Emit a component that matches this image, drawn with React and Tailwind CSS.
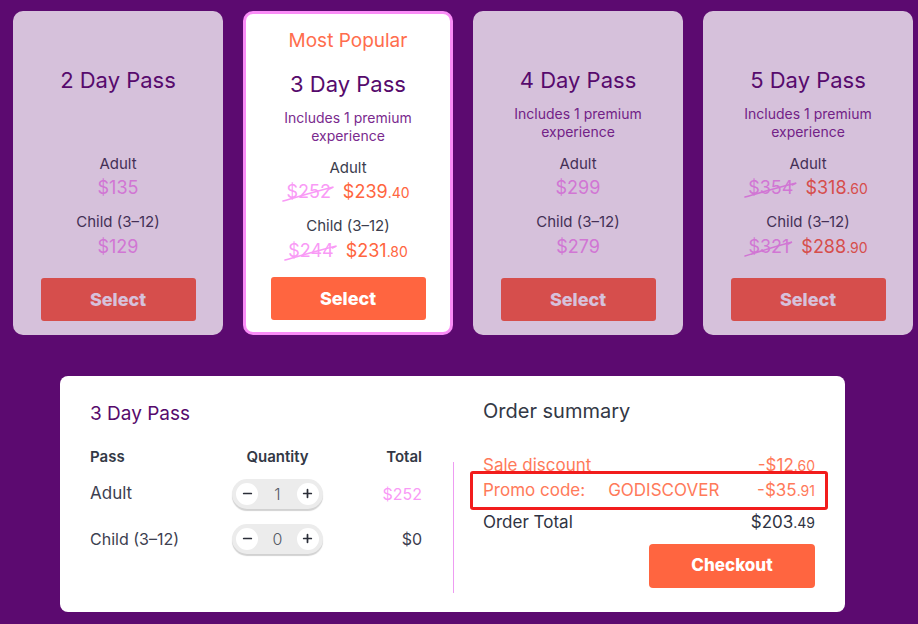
import React from "react";
import { Minus, Plus } from "lucide-react";

const PINK = "#f99af6";

function Strike({ children }) {
  return (
    <span className="relative inline-block text-[#f99af6]">
      {children}
      <svg
        className="absolute left-[-3px] top-0 h-full w-[calc(100%+6px)] overflow-visible"
        viewBox="0 0 50 24"
        preserveAspectRatio="none"
        fill="none"
      >
        <path d="M0 21 C 14 17, 30 12, 50 7 L 46 9" stroke={PINK} strokeWidth="1.6" strokeLinecap="round" />
      </svg>
    </span>
  );
}

function Money({ main, cents, small = "text-[14px]" }) {
  return (
    <span>
      {main}
      {cents && <span className={small}>{cents}</span>}
    </span>
  );
}

function PriceRow({ p }) {
  if (!p.old) {
    return <div className="mt-[2px] h-[24px] text-[18px] leading-[24px] text-[#f99af6]">{p.main}</div>;
  }
  return (
    <div className="mt-[2px] flex h-[24px] items-baseline gap-[12px] text-[18px] leading-[24px]">
      <Strike>{p.old}</Strike>
      <span className="text-[#ff6540]">
        <Money main={p.main} cents={p.cents} />
      </span>
    </div>
  );
}

function Card({ title, includes, adult, child, active }) {
  const body = (
    <>
      <div className="text-[22px] leading-[28px] text-[#560a6c]">{title}</div>
      <div className="mt-[11px] h-[36px] text-center text-[14px] leading-[18px] text-[#7a2a8e]">
        {includes && (
          <>
            Includes 1 premium
            <br />
            experience
          </>
        )}
      </div>
      <div className="mt-[13px] text-[15px] leading-[20px] text-[#3b3d4d]">Adult</div>
      <PriceRow p={adult} />
      <div className="mt-[12px] text-[15px] leading-[20px] text-[#3b3d4d]">Child (3–12)</div>
      <div className="mt-[1px]">
        <PriceRow p={child} />
      </div>
      <button className="mt-auto h-[43px] w-[155px] rounded-[3px] bg-[#ff6540] text-[18px] font-extrabold text-white">
        Select
      </button>
    </>
  );
  if (active) {
    return (
      <div className="flex h-[324px] w-[210px] flex-col items-center rounded-[10px] border-[3px] border-[#fa8cf7] bg-white pb-[12px] pt-[15px]">
        <div className="text-[19px] leading-[24px] text-[#ff6d4d]">Most Popular</div>
        <div className="mt-[17px] flex flex-1 flex-col items-center">{body}</div>
      </div>
    );
  }
  return (
    <div className="flex h-[324px] w-[210px] flex-col items-center rounded-[10px] bg-white pb-[14px] pt-[55px] opacity-75">
      {body}
    </div>
  );
}

function Stepper({ value }) {
  return (
    <div className="flex h-[30px] w-[91px] items-center justify-between rounded-full bg-[#ececec] px-[4px] shadow-[0_2px_1px_rgba(0,0,0,0.18)]">
      <span className="flex h-[22px] w-[22px] items-center justify-center rounded-full bg-white text-[#2b2e38]">
        <Minus size={13} strokeWidth={3.2} />
      </span>
      <span className="text-[16px] font-light text-[#555a66]">{value}</span>
      <span className="flex h-[22px] w-[22px] items-center justify-center rounded-full bg-white text-[#2b2e38]">
        <Plus size={13} strokeWidth={3.2} />
      </span>
    </div>
  );
}

export default function App() {
  const cards = [
    { title: "2 Day Pass", includes: false, adult: { main: "$135" }, child: { main: "$129" } },
    {
      title: "3 Day Pass",
      includes: true,
      active: true,
      adult: { old: "$252", main: "$239", cents: ".40" },
      child: { old: "$244", main: "$231", cents: ".80" },
    },
    { title: "4 Day Pass", includes: true, adult: { main: "$299" }, child: { main: "$279" } },
    {
      title: "5 Day Pass",
      includes: true,
      adult: { old: "$354", main: "$318", cents: ".60" },
      child: { old: "$321", main: "$288", cents: ".90" },
    },
  ];

  return (
    <div
      className="h-[624px] w-[918px] overflow-hidden bg-[#5c0a70]"
      style={{ fontFamily: "Inter, 'Noto Sans', sans-serif" }}
    >
      <div className="flex gap-[20px] pl-[13px] pt-[11px]">
        {cards.map((c) => (
          <Card key={c.title} {...c} />
        ))}
      </div>

      <div className="ml-[60px] mt-[41px] flex h-[236px] w-[785px] rounded-[8px] bg-white px-[30px]">
        {/* left */}
        <div className="w-[332px] pt-[25px]">
          <div className="text-[19px] leading-[26px] text-[#560a6c]">3 Day Pass</div>
          <div className="mt-[20px] grid grid-cols-[142px_91px_1fr] items-center text-[15px] font-semibold leading-[20px] text-[#333845]">
            <span>Pass</span>
            <span className="whitespace-nowrap text-center">Quantity</span>
            <span className="text-right">Total</span>
          </div>
          <div className="mt-[4px] grid h-[45px] grid-cols-[142px_91px_1fr] items-center">
            <span className="text-[17px] text-[#3d4050]">Adult</span>
            <Stepper value="1" />
            <span className="text-right text-[16px] text-[#f99af6]">$252</span>
          </div>
          <div className="grid h-[45px] grid-cols-[142px_91px_1fr] items-center">
            <span className="text-[16px] text-[#3d4050]">Child (3–12)</span>
            <Stepper value="0" />
            <span className="text-right text-[16px] text-[#3d4050]">$0</span>
          </div>
        </div>

        {/* divider */}
        <div className="ml-[31px] mt-[86px] h-[131px] w-px bg-[#ee9cf2]" />

        {/* right */}
        <div className="ml-[29px] flex w-[332px] flex-col pt-[22px]">
          <div className="text-[20px] leading-[26px] text-[#333845]">Order summary</div>
          <div className="mt-[29px] flex h-[24px] items-baseline justify-between text-[17px] leading-[24px] text-[#ff7a5a]">
            <span>Sale discount</span>
            <Money main="-$12" cents=".60" />
          </div>
          <div className="relative mt-[1px] flex h-[24px] items-baseline text-[17px] leading-[24px] text-[#ff7a5a]">
            <div className="pointer-events-none absolute bottom-[-8px] left-[-13px] right-[-13px] top-[-7px] rounded-[3px] border-[3px] border-[#f21c1c]" />
            <span>Promo code:</span>
            <span className="ml-[23px]">GODISCOVER</span>
            <span className="ml-auto">
              <Money main="-$35" cents=".91" />
            </span>
          </div>
          <div className="mt-[8px] flex h-[24px] items-baseline justify-between text-[17px] leading-[24px] text-[#2f3342]">
            <span>Order Total</span>
            <Money main="$203" cents=".49" />
          </div>
          <button className="ml-auto mt-[10px] h-[44px] w-[166px] rounded-[4px] bg-[#ff6540] text-[17px] font-extrabold text-white">
            Checkout
          </button>
        </div>
      </div>
    </div>
  );
}
